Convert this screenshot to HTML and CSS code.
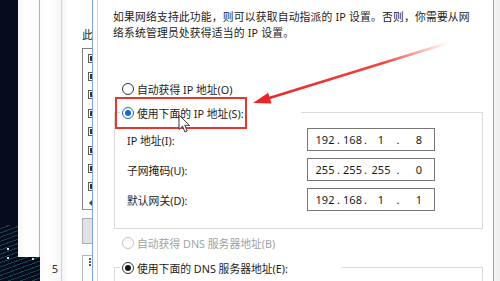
FILE: index.html
```html
<!DOCTYPE html>
<html lang="zh-CN">
<head>
<meta charset="utf-8">
<title>IPv4 属性</title>
<link rel="stylesheet" href="styles.css">
</head>
<body>
<div class="screen">
  <div class="desk">
    <div class="win w1"></div>
    <div class="win w2"><span class="num">5</span></div>
    <div class="win w3"></div>
    <div class="props">
      <div class="props-label">此</div>
      <div class="listbox">
        <div class="item"><span class="chk"></span></div>
        <div class="item"><span class="chk"></span></div>
        <div class="item"><span class="chk"></span></div>
        <div class="item"><span class="chk"></span></div>
        <div class="item"><span class="chk"></span></div>
        <div class="item"><span class="chk"></span></div>
        <div class="item"><span class="chk"></span></div>
        <div class="item"><span class="chk"></span></div>
        <div class="hscroll"><span class="arr"></span></div>
      </div>
      <div class="btn"></div>
      <div class="desc"></div>
    </div>
    <div class="frame"></div>
  </div>

  <div class="dialog">
    <p class="intro">如果网络支持此功能，则可以获取自动指派的 IP 设置。否则，你需要从网<br>络系统管理员处获得适当的 IP 设置。</p>

    <div class="opt first"><span class="radio"></span><span>自动获得 IP 地址(O)</span></div>

    <div class="group g1">
      <div class="ghead">
        <span class="seg l"></span>
        <span class="radio on blue"></span>
        <span class="lbl">使用下面的 IP 地址(S):</span>
        <span class="seg r"></span>
      </div>
      <div class="rows">
        <div class="row">
          <span>IP 地址(I):</span>
          <div class="ipbox"><span>192</span><span>.</span><span>168</span><span>.</span><span>1</span><span>.</span><span>8</span></div>
        </div>
        <div class="row">
          <span>子网掩码(U):</span>
          <div class="ipbox"><span>255</span><span>.</span><span>255</span><span>.</span><span>255</span><span>.</span><span>0</span></div>
        </div>
        <div class="row">
          <span>默认网关(D):</span>
          <div class="ipbox"><span>192</span><span>.</span><span>168</span><span>.</span><span>1</span><span>.</span><span>1</span></div>
        </div>
      </div>
    </div>

    <div class="opt dns1 dis"><span class="radio off"></span><span>自动获得 DNS 服务器地址(B)</span></div>

    <div class="group g2">
      <div class="ghead">
        <span class="seg l"></span>
        <span class="radio on"></span>
        <span class="lbl">使用下面的 DNS 服务器地址(E):</span>
        <span class="seg r"></span>
      </div>
    </div>
  </div>

  <div class="edge"></div>

  <div class="callout"></div>

  <svg class="arrow" width="500" height="281" viewBox="0 0 500 281">
    <defs>
      <linearGradient id="fade" gradientUnits="userSpaceOnUse" x1="448" y1="43" x2="266" y2="99">
        <stop offset="0" stop-color="#ff3b30" stop-opacity="0"/>
        <stop offset="0.35" stop-color="#f0302a" stop-opacity="0.9"/>
        <stop offset="1" stop-color="#e8262a" stop-opacity="1"/>
      </linearGradient>
    </defs>
    <line x1="448" y1="43" x2="266" y2="99" stroke="url(#fade)" stroke-width="2.5" stroke-linecap="round"/>
    <polygon points="253,103 271.5,103.6 268.2,92.8" fill="#e8262a"/>
  </svg>

  <svg class="cursor" width="13" height="20" viewBox="0 0 13 20">
    <path d="M1 1 L1 15.5 L4.5 12.2 L7 18 L9.2 17 L6.8 11.3 L11.5 11.3 Z" fill="#fff" stroke="#3a3a3a" stroke-width="1" stroke-linejoin="round"/>
  </svg>
</div>
</body>
</html>
```

FILE: styles.css
```css
* {
  box-sizing: border-box;
  margin: 0;
  padding: 0;
}

html, body {
  width: 500px;
  height: 281px;
  overflow: hidden;
  background: #070b1e;
}

body {
  font-family: "Noto Sans", "Noto Sans CJK SC", sans-serif;
  font-size: 10.8px;
  color: #1c1c1c;
}

.screen {
  position: relative;
  width: 500px;
  height: 281px;
  display: flex;
  overflow: hidden;
}

/* ---------- background windows on the left ---------- */
.desk {
  width: 97px;
  height: 281px;
  flex: none;
  display: flex;
  align-items: flex-start;
  padding-left: 18px;
  background:
    radial-gradient(circle 1.2px at 8px 249px, #cfe8f0 0, #cfe8f0 60%, transparent 100%),
    radial-gradient(circle 1.2px at 8px 258px, #cfe8f0 0, #cfe8f0 60%, transparent 100%),
    radial-gradient(circle 1.2px at 33px 259px, #cfe8f0 0, #cfe8f0 60%, transparent 100%),
    repeating-linear-gradient(160deg, rgba(60, 170, 140, 0.0) 0 3px, rgba(60, 170, 140, 0.35) 3px 4px),
    #070b1e;
  background-size: auto, auto, auto, 40px 60px, auto;
  background-position: 0 0, 0 0, 0 0, 0 225px, 0 0;
  background-repeat: no-repeat;
}

.win {
  background: #fff;
  flex: none;
}

.w1 {
  width: 22px;
  height: 257px;
  background: linear-gradient(to right, #f4f4f4, #ffffff 35%, #fbfbfb);
  border-right: 1px solid #b3b3b3;
}

.w2 {
  width: 22px;
  height: 281px;
  background: linear-gradient(to right, #fafafa, #ffffff 40%, #f6f6f6);
  border-right: 1px solid #d4d4d4;
  display: flex;
  align-items: flex-end;
  justify-content: flex-end;
  padding: 0 3px 6px 0;
}

.num {
  font-size: 11px;
  line-height: 12px;
  color: #333;
}

.w3 {
  width: 20px;
  height: 281px;
  background: linear-gradient(to right, #f3f3f3, #ffffff 30%);
}

.props {
  width: 10px;
  height: 281px;
  flex: none;
  background: #fff;
  overflow: hidden;
  padding-top: 27px;
}

.props-label {
  line-height: 16px;
  height: 16px;
}

.listbox {
  margin-top: 5px;
  width: 30px;
  border-left: 1px solid #7f7f7f;
  border-top: 1px solid #7f7f7f;
  border-bottom: 1px solid #9a9a9a;
}

.item {
  height: 18.4px;
  display: flex;
  align-items: center;
  padding-left: 5px;
}

.chk {
  width: 9px;
  height: 9px;
  border: 1px solid #5c5c5c;
  background: #fff;
  display: flex;
  align-items: center;
  justify-content: flex-start;
  padding-left: 1px;
}

.chk::after {
  content: "";
  width: 2px;
  height: 5px;
  background: #333;
}

.hscroll {
  height: 13px;
  display: flex;
  align-items: center;
  padding-left: 6px;
}

.arr {
  width: 0;
  height: 0;
  border-top: 3px solid transparent;
  border-bottom: 3px solid transparent;
  border-right: 3px solid #444;
}

.btn {
  margin-top: 8px;
  width: 30px;
  height: 26px;
  background: #e1e1e1;
  border: 1px solid #adadad;
}

.desc {
  margin-top: 11px;
  width: 30px;
  height: 40px;
  border-left: 1px solid #b5b5b5;
  border-top: 1px solid #b5b5b5;
  background:
    radial-gradient(circle 1px at 7px 3px, #555 0 70%, transparent 100%),
    radial-gradient(circle 1px at 7px 6px, #555 0 70%, transparent 100%),
    radial-gradient(circle 1px at 7px 9px, #555 0 70%, transparent 100%),
    #fff;
}

.frame {
  width: 5px;
  height: 281px;
  flex: none;
  background: #fff;
  border-left: 1px solid #7ea8e2;
}

/* ---------- TCP/IPv4 dialog ---------- */
.dialog {
  width: 397px;
  height: 281px;
  flex: none;
  background: #fff;
  border-left: 1px solid #d6d6d6;
  border-right: 1px solid #a2a2a2;
  padding: 9px 10px 0 16px;
  display: flex;
  flex-direction: column;
  overflow: hidden;
}

.intro {
  line-height: 16px;
  margin-left: -1px;
  letter-spacing: 0.18px;
  white-space: nowrap;
}

.opt {
  display: flex;
  align-items: center;
  gap: 3px;
  height: 16px;
  padding-left: 8px;
  white-space: nowrap;
  flex: none;
}

.opt.first {
  margin-top: 40px;
}

.opt.dns1 {
  margin-top: 6px;
}

.opt.dis {
  color: #a2a2a2;
}

.radio {
  width: 12px;
  height: 12px;
  flex: none;
  border-radius: 50%;
  border: 1px solid #333;
  background: #fff;
  display: flex;
  align-items: center;
  justify-content: center;
}

.radio.on::after {
  content: "";
  width: 6px;
  height: 6px;
  border-radius: 50%;
  background: #161616;
}

.radio.blue {
  border-color: #1d63c4;
}

.radio.blue::after {
  background: #0d6bd5;
}

.radio.off {
  border-color: #c4c4c4;
}

.group {
  border: 1px solid #dadada;
  border-top: none;
  display: flex;
  flex-direction: column;
  flex: none;
}

.g1 {
  margin-top: 15px;
  padding-bottom: 17px;
}

.g2 {
  margin-top: 16px;
  min-height: 40px;
}

.ghead {
  display: flex;
  align-items: center;
  height: 17px;
  margin-top: -8px;
  white-space: nowrap;
}

.seg {
  height: 1px;
  background: #dadada;
}

.seg.l {
  width: 6px;
  margin-left: -1px;
  margin-right: 2px;
}

.seg.r {
  flex: 1;
  margin-right: -1px;
}

.ghead .radio {
  margin-right: 3px;
}

.g1 .lbl {
  margin-right: 57px;
}

.g2 .lbl {
  margin-right: 54px;
}

.rows {
  display: flex;
  flex-direction: column;
  gap: 7px;
  margin-top: 7px;
  padding-left: 12px;
}

.row {
  display: grid;
  grid-template-columns: 180px 128px;
  align-items: center;
  height: 23px;
  white-space: nowrap;
}

.ipbox {
  height: 23px;
  border: 1px solid #767676;
  background: #fff;
  display: grid;
  grid-template-columns: 22px 5px 23px 3px 28px 6px 36px;
  align-items: center;
  padding-left: 6px;
  font-size: 11px;
  line-height: 21px;
  text-align: center;
  color: #1a1a1a;
}

.edge {
  flex: 1;
  height: 281px;
  background: linear-gradient(to right, #f7f7f7, #ececec);
}

/* ---------- annotations over the screenshot ---------- */
.callout {
  position: absolute;
  left: 115px;
  top: 97px;
  width: 132px;
  height: 32px;
  border: 2px solid #e6372e;
  pointer-events: none;
}

.arrow {
  position: absolute;
  left: 0;
  top: 0;
  pointer-events: none;
}

.cursor {
  position: absolute;
  left: 178px;
  top: 114px;
  pointer-events: none;
}
```
